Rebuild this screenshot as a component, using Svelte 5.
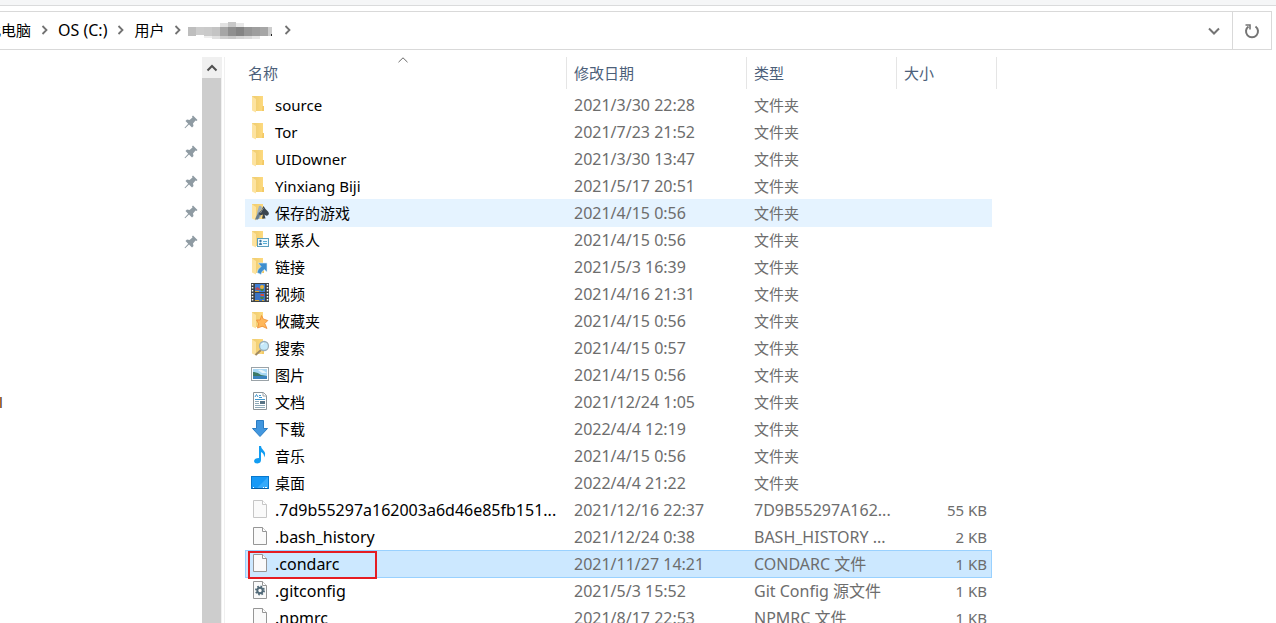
<script>
  const FOLDER = '文件夹';
  const rows = [
    { icon: 'folder', name: 'source', date: '2021/3/30 22:28', type: FOLDER },
    { icon: 'folder', name: 'Tor', date: '2021/7/23 21:52', type: FOLDER },
    { icon: 'folder', name: 'UIDowner', date: '2021/3/30 13:47', type: FOLDER },
    { icon: 'folder', name: 'Yinxiang Biji', date: '2021/5/17 20:51', type: FOLDER },
    { icon: 'games', name: '保存的游戏', date: '2021/4/15 0:56', type: FOLDER, hover: true },
    { icon: 'contacts', name: '联系人', date: '2021/4/15 0:56', type: FOLDER },
    { icon: 'links', name: '链接', date: '2021/5/3 16:39', type: FOLDER },
    { icon: 'video', name: '视频', date: '2021/4/16 21:31', type: FOLDER },
    { icon: 'favorites', name: '收藏夹', date: '2021/4/15 0:56', type: FOLDER },
    { icon: 'search', name: '搜索', date: '2021/4/15 0:57', type: FOLDER },
    { icon: 'pictures', name: '图片', date: '2021/4/15 0:56', type: FOLDER },
    { icon: 'documents', name: '文档', date: '2021/12/24 1:05', type: FOLDER },
    { icon: 'downloads', name: '下载', date: '2022/4/4 12:19', type: FOLDER },
    { icon: 'music', name: '音乐', date: '2021/4/15 0:56', type: FOLDER },
    { icon: 'desktop', name: '桌面', date: '2022/4/4 21:22', type: FOLDER },
    { icon: 'blank', name: '.7d9b55297a162003a6d46e85fb151...', date: '2021/12/16 22:37', type: '7D9B55297A162...', size: '55 KB' },
    { icon: 'file', name: '.bash_history', date: '2021/12/24 0:38', type: 'BASH_HISTORY ...', size: '2 KB' },
    { icon: 'file', name: '.condarc', date: '2021/11/27 14:21', type: 'CONDARC 文件', size: '1 KB', selected: true },
    { icon: 'config', name: '.gitconfig', date: '2021/5/3 15:52', type: 'Git Config 源文件', size: '1 KB' },
    { icon: 'file', name: '.npmrc', date: '2021/8/17 22:53', type: 'NPMRC 文件', size: '1 KB' }
  ];
  const folderBased = ['folder', 'games', 'contacts', 'links', 'favorites', 'search'];
  const pins = [1, 2, 3, 4, 5];
  // x, y, width, height, grey level of each block that hides the user name
  const mosaic = [
    [0, 5, 8, 9, 190], [8, 5, 8, 8, 204], [16, 5, 8, 9, 202], [24, 5, 8, 9, 196],
    [32, 5, 8, 9, 166], [40, 5, 8, 9, 143], [48, 5, 8, 9, 132], [56, 5, 8, 9, 150],
    [64, 5, 8, 9, 158], [72, 5, 8, 9, 166], [80, 5, 4, 9, 205],
    [32, 1, 8, 4, 226], [40, 0, 8, 5, 200], [48, 1, 8, 4, 232],
    [16, 14, 8, 2, 238], [24, 14, 8, 3, 224], [32, 14, 8, 3, 206], [40, 14, 8, 3, 200],
    [48, 14, 8, 3, 212], [56, 14, 8, 3, 218], [64, 14, 8, 3, 230]
  ];
</script>

{#snippet chevron()}
  <svg class="chevron" width="8" height="10" viewBox="0 0 8 10" aria-hidden="true"><path d="M1.5 1 5.500 5 1.500 9" fill="none" stroke="#727272" stroke-width="1.8" /></svg>
{/snippet}

{#snippet fileIcon(kind)}
  <svg class="icon" width="20" height="20" viewBox="0 0 20 20" aria-hidden="true">
    {#if folderBased.includes(kind)}
      <path d="M4 2H13V12.5L14 13V17H4Z" fill="url(#gold)" />
      <path d="M12.5 12H14V17H12Z" fill="#f3c964" />
      <path d="M2 2H3L6 4V18.5L2 16.5Z" fill="#fde3a0" />
      <path d="M2 2H3.5L6 3.5V5L2.500 2.800Z" fill="#f3cf73" />
    {/if}
    {#if kind === 'games'}
      <path d="M9 4Q11.500 3 12 6L10 9.500 11 14 9 17H7L6.500 14 7.500 9Z" fill="#9fb0bc" />
      <path d="M6 15 9 10 10 13 8 17.500H5Z" fill="#667b8c" />
      <path d="M13.500 4Q15 7 18 9.500 20 12 17.500 13.500 15.500 14 14.500 12.500L15.500 16.500H12L13 12.500Q9 14.500 9 11 12 8 13.500 4Z" fill="#3b454d" />
      <path d="M13.500 6Q11.500 9 10.500 11" stroke="#87929a" fill="none" />
    {:else if kind === 'contacts'}
      <rect x="7.500" y="9.500" width="11" height="8" fill="#eef9fe" stroke="#5b9ebd" />
      <circle cx="10.500" cy="12" r="1.200" fill="#3978a5" />
      <path d="M9 16Q9 13.500 10.500 13.500T12 16Z" fill="#3978a5" />
      <path d="M13 12.500H17M13 14.500H17" stroke="#58add5" />
    {:else if kind === 'links'}
      <path d="M8 7H17V16L14.200 13.500Q11.500 15.500 11 18.500L7 16.500Q7.500 13 11 10.500Z" fill="#3e8ece" stroke="#d9edf8" stroke-width=".6" />
    {:else if kind === 'favorites'}
      <path d="M11.500 5.500 13.300 9 17.800 10.500 14.800 13.500 17 18.500 12.300 16.300 7.500 18 8.700 13.800 6.500 10 10.200 10Z" fill="#ffb75a" stroke="#ec8c36" stroke-width=".8" />
    {:else if kind === 'search'}
      <path d="M11 13 5.500 18" stroke="#a18a62" stroke-width="2" />
      <circle cx="14" cy="9" r="4.500" fill="#c5e9fa" stroke="#9bafba" stroke-width="1.300" />
      <path d="M11.500 8Q12 6.500 14 6" stroke="#f5fdff" fill="none" />
    {:else if kind === 'video'}
      <rect x="1" y="0" width="18" height="19" fill="#3d4246" />
      <rect x="5" y="1" width="10" height="8" fill="#3f7fd6" />
      <rect x="5" y="10" width="10" height="8" fill="#3a74c6" />
      <path d="M2.500 1V19M17.500 1V19" stroke="#fff" stroke-width="1.500" stroke-dasharray="1.500 1.500" />
      <path d="M5 6Q7 3 9 5L11 7H7Z" fill="#b84853" /><circle cx="12" cy="4" r="2" fill="#e8b339" />
      <path d="M10 6H14L13 8H11Z" fill="#4c823a" /><path d="M10 11H14V13H11Z" fill="#d64c3d" />
      <path d="M10 14H14L13 16H11Z" fill="#4c823a" />
      <path d="M5 8.500H9M5 17.500H9M12 17.500H14" stroke="#d6a63b" />
    {:else if kind === 'pictures'}
      <rect x="1.500" y="3.500" width="17" height="13" fill="#fff" stroke="#9ba3a8" />
      <rect x="3" y="5" width="14" height="10" fill="#a8d7f4" />
      <path d="M3 8Q8 8 11 11L17 12V13H3Z" fill="#3c7965" />
      <path d="M3 12H17V15H3Z" fill="#3b83bd" />
      <path d="M8 6Q11 5 14 7L17 9H12Z" fill="#e9f6fb" />
    {:else if kind === 'documents'}
      <path d="M3.500 1.500H13.500L16.500 4.500V18.500H3.500Z" fill="#fff" stroke="#8b9499" />
      <path d="M13 1.500V5H16.500" fill="#fff" stroke="#9aa2a7" />
      <path d="M5 6 6.500 3.500 8 6M9 4.500H11M9 6.500H12M5 8.500H15" fill="none" stroke="#3f97cf" />
      <path d="M5 10.500H9M5 12.500H9M5 14.500H15M5 16.500H15" stroke="#8faab9" />
      <rect x="10" y="10" width="5" height="3" fill="#597485" />
    {:else if kind === 'downloads'}
      <path d="M6.500 2.500H13.500V10.500H17.500L10 18.500 2.500 10.500H6.500Z" fill="#4297df" stroke="#2b7dc3" />
    {:else if kind === 'music'}
      <path d="M9 1H11Q11 3.500 13.500 5.500 16.500 8 14 12.500 14.500 8.500 11 7V15Q11 18 7.500 18.500 4 18.500 4 16 4.500 13 9 13Z" fill="#129df2" />
    {:else if kind === 'desktop'}
      <rect x="1.500" y="4.500" width="17" height="12" fill="#1699f7" stroke="#0878cd" />
      <path d="M7 16 18 5V16Z" fill="#35aafb" />
      <path d="M2 16.500H18" stroke="#055da5" /><path d="M3 15.500H4M13 15.500H14M15 15.500H17" stroke="#fff" />
    {:else if !folderBased.includes(kind)}
      <path d="M3.500 1.500H12.500L16.500 5.500V18.500H3.500Z" fill="#fafafa" stroke={kind === 'blank' ? '#c6c6c6' : '#969696'} />
      <path d="M12.500 1.500V5.500H16.500" fill="#fff" stroke={kind === 'blank' ? '#c6c6c6' : '#969696'} />
      {#if kind === 'config'}
        <circle cx="10" cy="10.500" r="4" fill="none" stroke="#526a78" stroke-width="2" stroke-dasharray="1.570 1.570" />
        <circle cx="10" cy="10.500" r="2.700" fill="none" stroke="#526a78" stroke-width="2" />
      {/if}
    {/if}
  </svg>
{/snippet}

<svg class="defs" width="0" height="0" aria-hidden="true">
  <defs><linearGradient id="gold"><stop offset="0" stop-color="#efcd70" /><stop offset="1" stop-color="#ffdb80" /></linearGradient></defs>
</svg>

<div class="window">
  <div class="ribbon"></div>
  <header class="bar">
    <nav class="crumbs" aria-label="地址">
      <a class="first" href="#pc">此电脑</a>{@render chevron()}
      <a class="drive" href="#c">OS (C:)</a>{@render chevron()}
      <a href="#users">用户</a>{@render chevron()}
      <svg class="mosaic" width="84" height="18" viewBox="0 0 84 18" shape-rendering="crispEdges" aria-hidden="true">
        {#each mosaic as [x, y, w, h, v]}
          <rect {x} {y} width={w} height={h} fill={`rgb(${v},${v},${v})`} />
        {/each}
        <rect x="83" y="12" width="1" height="2" fill="#222" />
      </svg>
      {@render chevron()}
    </nav>
    <button class="drop" aria-label="以前的位置"><svg width="12" height="8" viewBox="0 0 12 8"><path d="M1 1.500 6 6.500 11 1.500" fill="none" stroke="#747474" stroke-width="2" /></svg></button>
    <button class="refresh" aria-label="刷新"><svg width="16" height="16" viewBox="0 0 16 16"><path d="M4.500 3.500A6 6 0 1 0 11.500 3.500" fill="none" stroke="#747474" stroke-width="2" /><path d="M1.500 2H6V6.500" fill="none" stroke="#747474" stroke-width="1.600" /></svg></button>
  </header>

  <div class="body">
    <aside class="side">
      <ul>
        {#each pins as pin (pin)}
          <li><svg width="14" height="14" viewBox="0 0 14 14" aria-hidden="true"><path d="M9 .5 13.500 5 12.500 6 11.500 5.500 9 8.500 9.500 11 8 12.500 5 9.500 1.200 13.200.5 12.800 4.200 8.700 1.500 6 3 4.500 5.500 5 8.500 2.500 8 1.500Z" fill="#8f9ba3" /></svg></li>
        {/each}
      </ul>
      <span class="clipped">l</span>
    </aside>
    <div class="scroll">
      <button aria-label="向上滚动"><svg width="12" height="8" viewBox="0 0 12 8"><path d="M1.500 6.500 6 2 10.500 6.500" fill="none" stroke="#505050" stroke-width="2" /></svg></button>
      <div class="thumb"></div>
    </div>
    <main>
      <table>
        <thead>
          <tr>
            <th class="sorted">名称<svg width="10" height="6" viewBox="0 0 10 6" aria-hidden="true"><path d="M.5 5.200 5 .8 9.500 5.200" fill="none" stroke="#686868" /></svg></th>
            <th>修改日期</th><th>类型</th><th>大小</th>
          </tr>
        </thead>
        <tbody>
          {#each rows as row}
            <tr class:hover={row.hover} class:selected={row.selected} class:doc={row.size}>
              <td class="name">{@render fileIcon(row.icon)}<span>{row.name}</span>{#if row.selected}<i class="mark"></i>{/if}</td>
              <td class="num">{row.date}</td>
              <td class="type">{row.type}</td>
              <td class="size">{row.size ?? ''}</td>
            </tr>
          {/each}
        </tbody>
      </table>
    </main>
  </div>
</div>

<style>
  :global(body) { margin: 0; background: #fff; }
  .defs { position: absolute; }
  .window {
    height: 100vh; display: flex; flex-direction: column; overflow: hidden;
    font: 15px/20px "Noto Sans", "Noto Sans CJK SC", sans-serif; color: #000;
  }
  button { border: 0; padding: 0; background: none; display: flex; align-items: center; justify-content: center; }
  .ribbon { flex: none; height: 5px; background: #f5f6f7; border-bottom: 1px solid #dadbdc; }
  .bar {
    flex: none; display: flex; height: 37px; margin: 5px 4px 0 0;
    border: 1px solid #d9d9d9; border-left: 0;
  }
  .crumbs { flex: 1; display: flex; align-items: center; min-width: 0; }
  .crumbs a { color: #000; text-decoration: none; white-space: nowrap; padding-bottom: 2px; }
  .crumbs .first { margin-left: -14px; }
  .crumbs .drive { font-size: 16px; }
  .chevron { flex: none; margin: 0 9px 2px 10px; }
  .mosaic { flex: none; margin: 0 2px 0 -3px; }
  .drop { width: 36px; }
  .refresh { width: 39px; border-left: 1px solid #d9d9d9; }
  .body { flex: 1; min-height: 0; display: flex; padding-top: 7px; }
  .side { width: 202px; flex: none; overflow: hidden; }
  .side ul { list-style: none; margin: 0; padding: 50px 4px 0 0; }
  .side li { height: 30px; display: flex; justify-content: flex-end; align-items: center; }
  .clipped { display: block; margin: 135px 0 0 -1px; color: #5c3200; }
  .scroll { width: 19px; flex: none; display: flex; flex-direction: column; border-right: 1px solid #f0f0f0; }
  .scroll button { height: 21px; background: #f0f0f0; }
  .thumb { flex: 1; background: #cdcdcd; }
  main { flex: 1; min-width: 0; overflow: hidden; margin-left: 2px; padding-left: 20px; border-left: 1px solid #f0f0f0; }
  table, thead, tbody { display: block; }
  tr { display: grid; grid-template-columns: 322px 180px 150px 100px; }
  th {
    position: relative; height: 32px; padding: 0 7px; text-align: left;
    font-weight: 400; line-height: 32px; color: #4c607a; border-right: 1px solid #e5e5e5;
  }
  th.sorted { padding-left: 3px; }
  .sorted svg { position: absolute; left: 153px; top: 0; }
  tbody { padding-top: 3px; }
  tbody tr { width: 747px; height: 28px; margin-top: -1px; grid-template-columns: 322px 180px 150px 95px; box-sizing: border-box; }
  td { padding: 0 7px; line-height: 28px; white-space: nowrap; color: #6d6d6d; }
  .name { position: relative; display: flex; align-items: center; gap: 5px; padding: 0 5px; color: #000; }
  .num, .doc .name, .doc .type { font-size: 16px; }
  .size { text-align: right; padding-right: 5px; }
  .icon { flex: none; margin-bottom: 2px; }
  .hover { background: #e5f3ff; }
  .selected { background: #cce8ff; box-shadow: inset 0 0 0 1px #99d1ff; }
  .mark { position: absolute; left: 3px; top: 1px; width: 125px; height: 24px; border: 2px solid #e51c23; }
</style>
